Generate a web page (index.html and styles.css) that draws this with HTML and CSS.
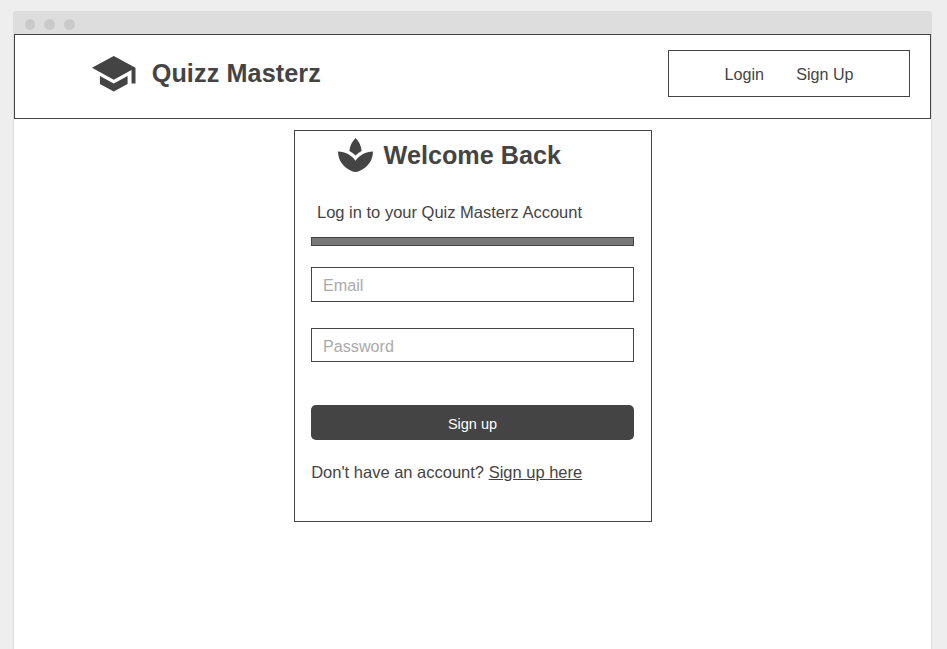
FILE: index.html
```html
<!DOCTYPE html>
<html lang="en">
<head>
<meta charset="utf-8">
<title>Quizz Masterz</title>
<link rel="stylesheet" href="styles.css">
</head>
<body>
<div class="window">
  <div class="titlebar"><span class="dot dot-first"></span><span class="dot"></span><span class="dot"></span></div>
  <div class="page">
    <header class="header">
      <div class="brand">
        <svg class="brand-icon" viewBox="1 3 22 18" preserveAspectRatio="none"><path d="M5 13.18v4L12 21l7-3.82v-4L12 17l-7-3.82zM12 3L1 9l11 6 9-4.91V17h2V9L12 3z"/></svg>
        <span class="brand-name">Quizz Masterz</span>
      </div>
      <nav class="nav"><a class="login">Login</a><a class="signup">Sign Up</a></nav>
    </header>
    <main class="card">
      <div class="welcome">
        <svg class="spa-icon" viewBox="2 2 20 20" preserveAspectRatio="none"><path d="M15.49 9.63c-.18-2.79-1.31-5.51-3.43-7.63-2.14 2.14-3.32 4.86-3.55 7.63 1.28.68 2.46 1.56 3.49 2.63 1.03-1.06 2.21-1.94 3.49-2.63zM12 15.45C9.85 12.17 6.18 10 2 10c0 5.32 3.36 9.82 8.03 11.49.63.23 1.29.4 1.97.51.68-.12 1.33-.29 1.97-.51C18.64 19.82 22 15.32 22 10c-4.18 0-7.85 2.17-10 5.45z"/></svg>
        <h1 class="heading">Welcome Back</h1>
      </div>
      <p class="subtitle">Log in to your Quiz Masterz Account</p>
      <div class="divider"></div>
      <div class="field email">Email</div>
      <div class="field password">Password</div>
      <div class="button">Sign up</div>
      <p class="prompt">Don't have an account? <a class="link">Sign up here</a></p>
    </main>
  </div>
</div>
</body>
</html>
```
FILE: styles.css
```css
* { box-sizing: border-box; }
body {
  margin: 0;
  height: 649px;
  overflow: hidden;
  background: #eee;
  color: #444;
  font: 16px/20px "Liberation Sans", Arial, sans-serif;
}
.window {
  width: 919px;
  height: 638px;
  margin: 11px 0 0 13px;
  display: flex;
  flex-direction: column;
}
.titlebar {
  height: 23px;
  flex: none;
  display: flex;
  gap: 9px;
  padding: 8px 0 0 12px;
  background: #ddd;
  border-radius: 3px 3px 0 0;
}
.dot { width: 11px; height: 11px; border-radius: 50%; background: #cacaca; }
.dot-first { width: 10px; }
.page {
  flex: 1;
  background: #fff;
  border: solid #ddd;
  border-width: 0 1px;
}
.header {
  height: 85px;
  border: 1px solid #444;
  display: flex;
  justify-content: space-between;
  align-items: flex-start;
  padding: 15px 20px 0 77px;
}
.brand { display: flex; align-items: flex-start; padding-top: 6px; }
.brand-icon { width: 43.5px; height: 35.5px; fill: #444; }
.brand-name { font-weight: bold; font-size: 25.2px; line-height: 30px; margin: 2px 0 0 16.2px; letter-spacing: .1px; }
.nav {
  width: 242px;
  height: 47px;
  border: 1px solid #444;
  display: flex;
  gap: 32.3px;
  padding: 13px 0 0 55.6px;
  font-size: 16.1px;
}
.card {
  width: 358px;
  height: 392px;
  margin: 11px 0 0 280px;
  border: 1px solid #444;
  padding: 6px 17px 0 16px;
}
.welcome { display: flex; padding-left: 27px; height: 65px; }
.spa-icon { width: 35px; height: 34px; margin-top: 1px; fill: #444; }
.heading { font-size: 25.2px; line-height: 30px; margin: 3px 0 0 10.6px; }
.subtitle { margin: 0 0 0 6px; font-size: 16.5px; }
.divider { height: 9px; margin-top: 15px; background: #777; border: 1px solid #444; }
.field { border: 1px solid #444; color: #aaa; padding: 7px 11px 0; font-size: 16.15px; }
.email { height: 35px; margin-top: 21px; }
.password { height: 34px; margin-top: 26px; }
.button {
  height: 35px;
  margin-top: 43px;
  border-radius: 5px;
  background: #444;
  color: #fff;
  font-size: 14.5px;
  line-height: 38px;
  text-align: center;
}
.prompt { margin: 22px 0 0 .2px; font-size: 16.5px; white-space: nowrap; }
.link { text-decoration: underline; }
```
